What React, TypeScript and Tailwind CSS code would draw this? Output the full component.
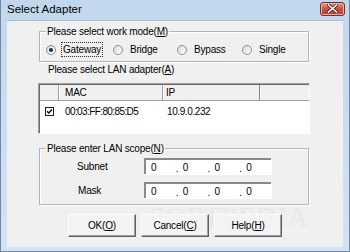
/**
 * Select Adapter dialog
 *
 * Small Windows-style dialog for picking the work mode, the LAN adapter
 * and the LAN scope.
 */

const font = { fontFamily: '"Liberation Sans", Arial, sans-serif' }

function Radio({ label, checked, focused }: { label: string; checked?: boolean; focused?: boolean }) {
  return (
    <div className="flex items-center">
      <span className="relative flex h-[10px] w-[10px] items-center justify-center rounded-full border border-[#8f8f8f] bg-gradient-to-br from-[#d8d8d8] to-[#ffffff]">
        {checked && <span className="h-[4px] w-[4px] rounded-full bg-[#1b2a3c]" />}
      </span>
      <span
        className={
          focused
            ? 'ml-[5px] border border-dotted border-[#303030] px-[1px] leading-[13px]'
            : 'ml-[6px] border border-transparent leading-[13px]'
        }
      >
        {label}
      </span>
    </div>
  )
}

function GroupBox({ legend, hotkey, className, children }: { legend: string; hotkey: string; className: string; children: React.ReactNode }) {
  return (
    <fieldset className={`border border-[#b4b4b4] shadow-[1px_1px_0_#ffffff,inset_1px_1px_0_#ffffff] ${className}`}>
      <legend className="ml-[6px] px-[1px] leading-[13px]">
        {legend}(<span className="underline">{hotkey}</span>)
      </legend>
      {children}
    </fieldset>
  )
}

function IpField() {
  return (
    <div className="flex h-[16px] w-[127px] items-center border-t-2 border-l-2 border-t-[#8a8a8a] border-l-[#8a8a8a] bg-white pl-[5px] shadow-[1px_1px_0_#ffffff]">
      <span className="w-[25px]">0</span>
      <span className="w-[7px] pt-[3px]">.</span>
      <span className="w-[25px]">0</span>
      <span className="w-[7px] pt-[3px]">.</span>
      <span className="w-[25px]">0</span>
      <span className="w-[7px] pt-[3px]">.</span>
      <span className="w-[25px]">0</span>
    </div>
  )
}

function Button({ text, hotkey }: { text: string; hotkey: string }) {
  return (
    <button className="flex h-[23px] w-[68px] items-center justify-center border border-t-[#ffffff] border-l-[#ffffff] border-r-[#5f5f5f] border-b-[#5f5f5f] bg-[#f3f3f3] shadow-[inset_-1px_-1px_0_#a0a0a0]">
      {text}(<span className="underline">{hotkey}</span>)
    </button>
  )
}

export default function App() {
  return (
    <div
      className="relative flex h-[252px] w-[350px] flex-col overflow-hidden border-x border-b border-[#6c89a8] bg-gradient-to-b from-[#c3d7ec] to-[#d4e3f3] text-[10px] tracking-[-0.2px] text-black"
      style={font}
    >
      {/* title bar */}
      <div className="flex h-[20px] items-center justify-between pl-[6px] pr-[4px]">
        <span className="text-[11.5px] tracking-normal">Select Adapter</span>
        <span className="mt-[-3px] flex h-[14px] w-[25px] items-center justify-center rounded-[3px] border border-[#7a2e27] bg-gradient-to-b from-[#e39a8c] via-[#c9503f] to-[#b8402f] shadow-[inset_0_0_0_1px_#ebb0a6]">
          <svg width="11" height="9" viewBox="0 0 11 9">
            <path d="M1.5 1 L9.5 8 M9.5 1 L1.5 8" stroke="#4a1a14" strokeWidth="3" strokeLinecap="square" />
            <path d="M1.5 1 L9.5 8 M9.5 1 L1.5 8" stroke="#ffffff" strokeWidth="1.6" strokeLinecap="square" />
          </svg>
        </span>
      </div>

      {/* client area */}
      <div className="relative mx-[6px] flex flex-1 flex-col border-t border-[#a9bdd3] bg-[#f0f0f0] pl-[32px] pr-[34px]">
        {/* watermark, sits under the buttons */}
        <div className="pointer-events-none absolute left-[142px] top-[182px] text-[28px] leading-[28px] tracking-[1px] text-[#e8e8e8]" style={{ fontFamily: '"Liberation Serif", serif' }}>
          SOFTPEDIA
        </div>

        <GroupBox legend="Please select work mode" hotkey="M" className="mt-[4px] h-[37px]">
          <div className="mt-[4px] flex pl-[6px]">
            <div className="w-[67px]">
              <Radio label="Gateway" checked focused />
            </div>
            <div className="w-[64px]">
              <Radio label="Bridge" />
            </div>
            <div className="w-[65px]">
              <Radio label="Bypass" />
            </div>
            <Radio label="Single" />
          </div>
        </GroupBox>

        <div className="mt-[2px] pl-[9px] leading-[12px]">
          Please select LAN adapter(<span className="underline">A</span>)
        </div>

        <div className="-ml-[1px] mt-[7px] h-[51px] w-[272px] border-t border-l border-t-[#a0a0a0] border-l-[#a0a0a0] border-b border-r border-b-white border-r-white bg-white shadow-[inset_1px_1px_0_#696969]">
          <div className="ml-[1px] mt-[1px] flex h-[16px] items-center border-b border-[#a0a0a0] bg-[#f0f0f0] leading-[15px]">
            <div className="h-full w-[19px] border-r border-[#a0a0a0] shadow-[1px_0_0_#ffffff]" />
            <div className="h-full w-[104px] border-r border-[#a0a0a0] pl-[6px] shadow-[1px_0_0_#ffffff]">MAC</div>
            <div className="h-full w-[97px] border-r border-[#808080] pl-[3px] shadow-[1px_0_0_#ffffff]">IP</div>
            <div className="h-full flex-1" />
          </div>
          <div className="ml-[1px] mt-[3px] flex h-[14px] items-center">
            <div className="flex w-[19px] justify-center">
              <span className="flex h-[9px] w-[9px] items-center justify-center border border-[#1e1e1e] bg-white">
                <svg width="7" height="7" viewBox="0 0 7 7">
                  <path d="M1 3.2 L2.8 5 L6 1.5" stroke="#111" strokeWidth="1.5" fill="none" />
                </svg>
              </span>
            </div>
            <div className="w-[104px] pl-[6px] tracking-[-0.6px]">00:03:FF:80:85:D5</div>
            <div className="pl-[4px] tracking-[-0.4px]">10.9.0.232</div>
          </div>
        </div>

        <GroupBox legend="Please enter LAN scope" hotkey="N" className="relative mt-[8px] h-[63px]">
          <div className="mt-[3px] flex flex-col gap-[8px]">
            <div className="flex items-center">
              <span className="w-[104px] pl-[37px]">Subnet</span>
              <IpField />
            </div>
            <div className="flex items-center">
              <span className="w-[104px] pl-[38px]">Mask</span>
              <IpField />
            </div>
          </div>
        </GroupBox>

        <div className="relative -mr-[2px] mt-[9px] flex justify-center gap-[5px]">
          <Button text="OK" hotkey="O" />
          <Button text="Cancel" hotkey="C" />
          <Button text="Help" hotkey="H" />
        </div>
      </div>
      <div className="h-[4px]" />
    </div>
  )
}
